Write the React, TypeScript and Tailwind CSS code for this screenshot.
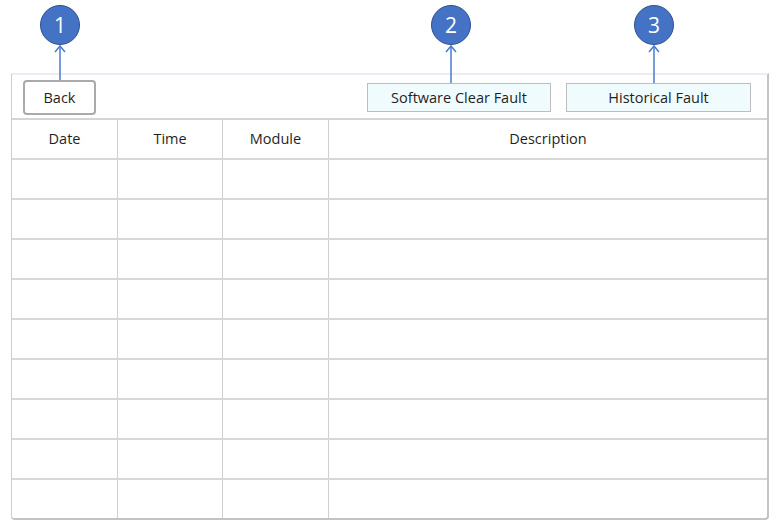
import React from "react";

const font = { fontFamily: '"Open Sans", "Noto Sans", sans-serif' };

function Marker({ n, x, lineTo }: { n: number; x: number; lineTo: number }) {
  return (
    <>
      <div
        className="absolute top-[5px] w-[40px] h-[40px] rounded-full bg-[#4472c4] border border-[#2f528f] flex items-center justify-center text-white text-[21px] leading-none"
        style={{ left: x - 20 }}
      >
        {n}
      </div>
      <svg
        className="absolute top-[44px]"
        style={{ left: x - 8 }}
        width="16"
        height={lineTo - 44}
      >
        <line x1="8" y1="2" x2="8" y2={lineTo - 44} stroke="#4a7bd0" strokeWidth="1.5" />
        <polyline points="3,8 8,2 13,8" fill="none" stroke="#4a7bd0" strokeWidth="1.5" />
      </svg>
    </>
  );
}

export default function App() {
  const rows = Array.from({ length: 9 });
  const cols = "grid grid-cols-[106px_105px_106px_1fr]";
  const cell = "border-r border-[#cfcfcf] last:border-r-0";
  return (
    <div className="relative w-[781px] h-[531px] bg-white overflow-hidden text-[#1f1f1f]" style={font}>
      <div className="ml-[11px] mt-[73px] w-[758px] border-t-2 border-t-[#e8eef6] border-l border-l-[#cccccc] border-r-2 border-r-[#c4c4c4] border-b-2 border-b-[#c4c4c4] rounded-b-[4px] flex flex-col">
        <div className="h-[45px] flex items-start border-b-2 border-[#d4d4d4]">
          <div className="ml-[11px] mt-[5px] w-[73px] h-[35px] border-[2.5px] border-[#aaaaaa] rounded-[4px] bg-white flex items-center justify-center text-[14.5px]">
            Back
          </div>
          <div className="ml-auto mt-[8px] flex gap-[15px] mr-[16px]">
            <div className="w-[184px] h-[29px] bg-[#f0fbfd] border border-[#bdbdbd] flex items-center justify-center text-[14.5px]">
              Software Clear Fault
            </div>
            <div className="w-[185px] h-[29px] bg-[#f0fbfd] border border-[#bdbdbd] flex items-center justify-center text-[14.5px]">
              Historical Fault
            </div>
          </div>
        </div>
        <div className={`${cols} h-[40px] border-b-2 border-[#d8d8d8] text-[14.5px]`}>
          <div className={`${cell} flex items-center justify-center`}>Date</div>
          <div className={`${cell} flex items-center justify-center`}>Time</div>
          <div className={`${cell} flex items-center justify-center`}>Module</div>
          <div className={`${cell} flex items-center justify-center`}>Description</div>
        </div>
        {rows.map((_, i) => (
          <div
            key={i}
            className={`${cols} ${i < rows.length - 1 ? "h-[40px] border-b-2 border-[#d8d8d8]" : "h-[38px]"}`}
          >
            <div className={cell} />
            <div className={cell} />
            <div className={cell} />
            <div className={cell} />
          </div>
        ))}
      </div>
      <Marker n={1} x={60} lineTo={80} />
      <Marker n={2} x={451} lineTo={83} />
      <Marker n={3} x={654} lineTo={83} />
    </div>
  );
}
